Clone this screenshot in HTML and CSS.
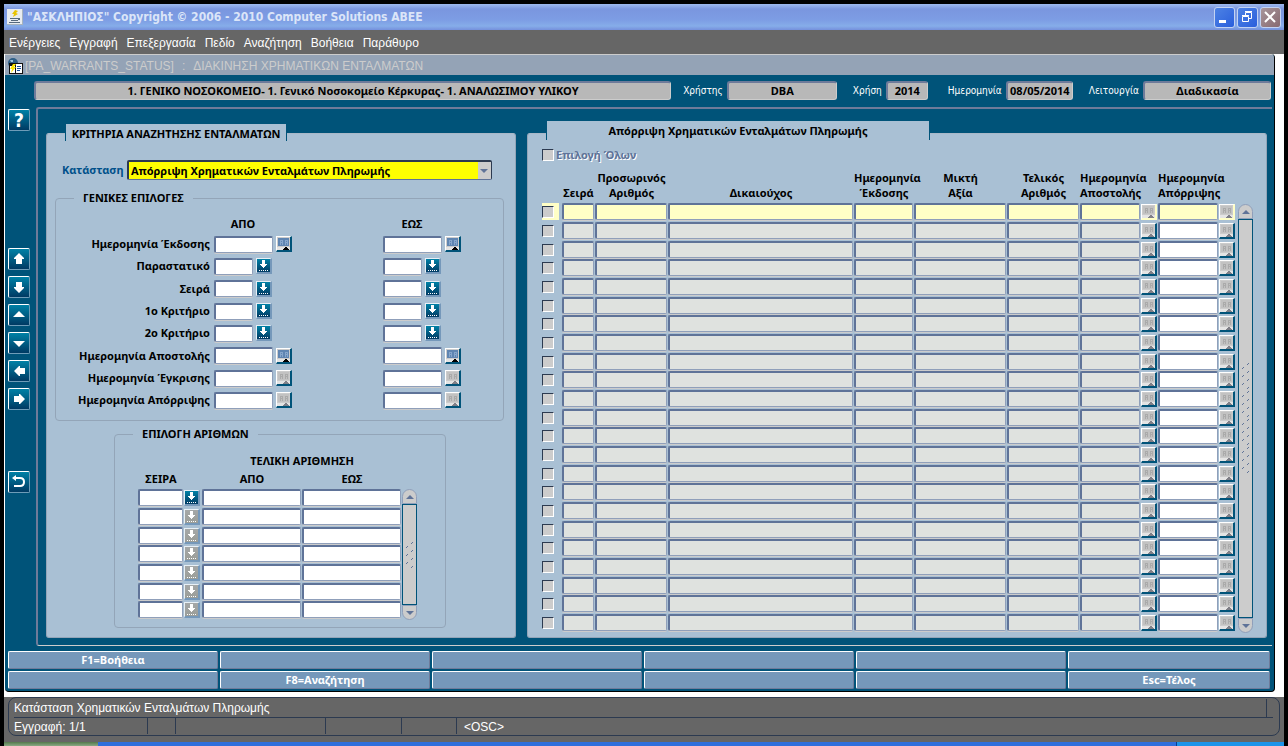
FILE: index.html
```html
<!DOCTYPE html>
<html lang="el">
<head>
    <meta charset="UTF-8">
    <title>ΑΣΚΛΗΠΙΟΣ</title>
    <link rel="stylesheet" href="styles.css">
</head>
<body>
<!--======= icons =======-->
<svg class="defs" width="0" height="0">
    <symbol id="i-lov" viewBox="0 0 13 13"><path fill="#fff" d="M5 1h3v4h2v1H9v1H8v1H7v1H6V8H5V7H4V6H3V5h2z"/><path stroke="#fff" stroke-dasharray="1 1" d="M2 11.500h9"/></symbol>
    <symbol id="i-cal" viewBox="0 0 13 13"><path fill="var(--sheet)" d="M1 1h11v8H1z"/><path fill="none" stroke="var(--grid)" d="M3 3.500h3M8 3.500h3M3 5.500h3M8 5.500h3M3.500 3v5M5.500 3v5M8.500 3v5M10.500 3v5"/><path fill="#e4e4e4" d="M0 10h13v3H0z"/><path fill="var(--peak)" d="M6 13v-1h1v-1h1v-1h2v1h1v1h1v1z"/></symbol>
    <symbol id="i-up" viewBox="0 0 18 18"><path fill="#fff" d="M9 3l5 5v1h-2v5H6V9H4V8z"/></symbol>
    <symbol id="i-down" viewBox="0 0 18 18"><path fill="#fff" d="M9 15l5-5V9h-2V4H6v5H4v1z"/></symbol>
    <symbol id="i-top" viewBox="0 0 18 18"><path fill="#fff" d="M9 5l6 6H3z"/></symbol>
    <symbol id="i-bottom" viewBox="0 0 18 18"><path fill="#fff" d="M9 13L3 7h12z"/></symbol>
    <symbol id="i-left" viewBox="0 0 18 18"><path fill="#fff" d="M4 9l5-5h1v2h5v6h-5v2H9z"/></symbol>
    <symbol id="i-right" viewBox="0 0 18 18"><path fill="#fff" d="M15 9l-5-5H9v2H4v6h5v2h1z"/></symbol>
    <symbol id="i-back" viewBox="0 0 18 18"><path fill="none" stroke="#fff" stroke-width="2" d="M4 5h6q4 0 4 4t-4 4H4"/><path fill="#fff" d="M2 5l4-3v6z"/></symbol>
    <symbol id="i-tri-up" viewBox="0 0 8 4"><path fill="#5f7398" d="M4 0l4 4H0z"/></symbol>
    <symbol id="i-tri-down" viewBox="0 0 8 4"><path fill="#5f7398" d="M4 4l4-4H0z"/></symbol>
    <symbol id="i-grip" viewBox="0 0 8 26"><path stroke="#5f7398" d="M0 6l2-2M5 2l2-2M0 14l2-2M5 10l2-2M0 22l2-2M5 18l2-2M5 26l2-2"/></symbol>
</svg>

<!--======= title bar =======-->
<header class="titlebar">
    <svg class="app-icon" width="16" height="16" viewBox="0 0 16 16"><path fill="#e8ecf0" d="M0 0h16v16H0z"/><path fill="#a7b3bd" d="M0 15h16v1H0zM15 0h1v16h-1z"/><path fill="#e9c400" d="M8 1l3 1-2 2 2 1-5 3 1-3H5z"/><path fill="#566a7d" d="M3 9h8v1H3zM4 11h7v1H4zM2 13h11v1H2zM11 9h2v2h-2z"/></svg>
    <h1>"ΑΣΚΛΗΠΙΟΣ" Copyright © 2006 - 2010 Computer Solutions ABEE</h1>
    <button class="win" type="button" aria-label="Ελαχιστοποίηση"><svg width="18" height="18" viewBox="0 0 18 18"><path fill="#fff" d="M4 12h7v3H4z"/></svg></button>
    <button class="win" type="button" aria-label="Επαναφορά"><svg width="18" height="18" viewBox="0 0 18 18"><path fill="none" stroke="#fff" d="M4.500 8.500h6v5h-6zM4 7.500h7M7.500 7V4.500h6v6H11M7 3.500h7"/></svg></button>
    <button class="win close" type="button" aria-label="Κλείσιμο"><svg width="18" height="18" viewBox="0 0 18 18"><path stroke="#fff" stroke-width="2" d="M4 4l10 10M14 4L4 14"/></svg></button>
</header>

<nav class="menubar">
    <a href="#">Ενέργειες</a>
    <a href="#">Εγγραφή</a>
    <a href="#">Επεξεργασία</a>
    <a href="#">Πεδίο</a>
    <a href="#">Αναζήτηση</a>
    <a href="#">Βοήθεια</a>
    <a href="#">Παράθυρο</a>
</nav>

<main class="mdi">
<div class="window">
    <div class="window-title">
        <svg width="16" height="16" viewBox="0 0 16 16"><circle cx="6" cy="5" r="5" fill="#2f5f86"/><path fill="#9fc4dd" d="M3 2h3v2H4zM7 5h3v2H7z"/><path fill="#111" d="M2 5h14v11H2z"/><path fill="#fff" d="M3 8h5v7H3zM9 6h6v9H9z"/><path fill="#ffe600" d="M6 6h3l-2 3h2l-5 6 1-4H3z"/><path fill="#1c4f9c" d="M10 8h4v1h-4zM10 10h4v1h-4zM10 12h3v1h-3z"/></svg>
        <span class="code">[PA_WARRANTS_STATUS]</span><span class="colon">:</span><span>ΔΙΑΚΙΝΗΣΗ ΧΡΗΜΑΤΙΚΩΝ ΕΝΤΑΛΜΑΤΩΝ</span>
    </div>

    <div class="info">
        <output class="grow">1. ΓΕΝΙΚΟ ΝΟΣΟΚΟΜΕΙΟ- 1. Γενικό Νοσοκομείο Κέρκυρας- 1. ΑΝΑΛΩΣΙΜΟΥ ΥΛΙΚΟΥ</output>
        <label for="usr">Χρήστης</label><output id="usr" class="w-user">DBA</output>
        <label for="yr">Χρήση</label><output id="yr" class="w-year">2014</output>
        <label for="dt">Ημερομηνία</label><output id="dt" class="w-date">08/05/2014</output>
        <label for="fn">Λειτουργία</label><output id="fn" class="w-func">Διαδικασία</output>
    </div>

    <div class="work">
        <div class="rail">
            <button type="button" class="help" aria-label="Βοήθεια">?</button>
            <div class="moves">
                <button type="button" aria-label="Πάνω"><svg><use href="#i-up"/></svg></button>
                <button type="button" aria-label="Κάτω"><svg><use href="#i-down"/></svg></button>
                <button type="button" aria-label="Προηγούμενη"><svg><use href="#i-top"/></svg></button>
                <button type="button" aria-label="Επόμενη"><svg><use href="#i-bottom"/></svg></button>
                <button type="button" aria-label="Αριστερά"><svg><use href="#i-left"/></svg></button>
                <button type="button" aria-label="Δεξιά"><svg><use href="#i-right"/></svg></button>
            </div>
            <button type="button" aria-label="Επιστροφή"><svg><use href="#i-back"/></svg></button>
        </div>

        <div class="canvas">
            <!--======= criteria =======-->
            <section class="panel criteria">
                <h2 class="tab">ΚΡΙΤΗΡΙΑ ΑΝΑΖΗΤΗΣΗΣ ΕΝΤΑΛΜΑΤΩΝ</h2>
                <div class="state">
                    <label for="state">Κατάσταση</label>
                    <div class="combo">
                        <select id="state"><option>Απόρριψη Χρηματικών Ενταλμάτων Πληρωμής</option></select>
                        <svg width="8" height="4"><use href="#i-tri-down"/></svg>
                    </div>
                </div>
                <fieldset class="general">
                    <legend>ΓΕΝΙΚΕΣ ΕΠΙΛΟΓΕΣ</legend>
                    <div class="range heads"><span></span><span>ΑΠΟ</span><span>ΕΩΣ</span></div>
                    <div id="ranges"></div>
                </fieldset>
                <fieldset class="numbers">
                    <legend>ΕΠΙΛΟΓΗ ΑΡΙΘΜΩΝ</legend>
                    <div class="scrolled">
                        <table>
                            <colgroup><col class="c-ser"><col class="c-lov"><col class="c-num"><col class="c-num"></colgroup>
                            <thead>
                                <tr><th></th><th></th><th colspan="2">ΤΕΛΙΚΗ ΑΡΙΘΜΗΣΗ</th></tr>
                                <tr><th>ΣΕΙΡΑ</th><th></th><th>ΑΠΟ</th><th>ΕΩΣ</th></tr>
                            </thead>
                            <tbody id="numbers"></tbody>
                        </table>
                        <div class="scroll"><button type="button" aria-label="Πάνω"><svg width="8" height="4"><use href="#i-tri-up"/></svg></button><div class="thumb"><svg width="8" height="26"><use href="#i-grip"/></svg></div><button type="button" aria-label="Κάτω"><svg width="8" height="4"><use href="#i-tri-down"/></svg></button></div>
                    </div>
                </fieldset>
            </section>

            <!--======= warrants =======-->
            <section class="panel warrants">
                <h2 class="tab">Απόρριψη Χρηματικών Ενταλμάτων Πληρωμής</h2>
                <label class="all"><input type="checkbox" disabled>Επιλογή Όλων</label>
                <div class="scrolled">
                    <table>
                        <colgroup>
                            <col class="c-chk"><col class="c-no"><col class="c-tmp"><col><col class="c-date"><col class="c-val"><col class="c-fin"><col class="c-day"><col class="c-btn"><col class="c-day"><col class="c-btn">
                        </colgroup>
                        <thead>
                            <tr>
                                <th></th><th>Σειρά</th><th>Προσωρινός<br>Αριθμός</th><th>Δικαιούχος</th><th>Ημερομηνία<br>Έκδοσης</th><th>Μικτή<br>Αξία</th><th>Τελικός<br>Αριθμός</th><th>Ημερομηνία<br>Αποστολής</th><th></th><th>Ημερομηνία<br>Απόρριψης</th><th></th>
                            </tr>
                        </thead>
                        <tbody id="warrants"></tbody>
                    </table>
                    <div class="scroll"><button type="button" aria-label="Πάνω"><svg width="8" height="4"><use href="#i-tri-up"/></svg></button><div class="thumb"><svg width="8" height="112"><use href="#i-grip" y="0" height="26"/><use href="#i-grip" y="28" height="26"/><use href="#i-grip" y="56" height="26"/><use href="#i-grip" y="84" height="26"/></svg></div><button type="button" aria-label="Κάτω"><svg width="8" height="4"><use href="#i-tri-down"/></svg></button></div>
                </div>
            </section>
        </div>
    </div>

    <div class="keys">
        <button type="button">F1=Βοήθεια</button><button type="button" aria-label="F2"></button><button type="button" aria-label="F3"></button><button type="button" aria-label="F4"></button><button type="button" aria-label="F5"></button><button type="button" aria-label="F6"></button>
        <button type="button" aria-label="F7"></button><button type="button">F8=Αναζήτηση</button><button type="button" aria-label="F9"></button><button type="button" aria-label="F10"></button><button type="button" aria-label="F11"></button><button type="button">Esc=Τέλος</button>
    </div>
</div>
</main>

<footer class="status">
    <div class="status-box">
        <p class="hint">Κατάσταση Χρηματικών Ενταλμάτων Πληρωμής</p>
        <div class="cells"><span class="rec">Εγγραφή: 1/1</span><span class="s1"></span><span class="s2"></span><span class="s3"></span><span class="s4"></span><span class="osc">&lt;OSC&gt;</span></div>
    </div>
</footer>
<div class="taskbar"><i class="start"></i><i class="tasks"></i><i class="tray"></i></div>
<script src="app.js"></script>
</body>
</html>
```
FILE: styles.css
```css
* {box-sizing: border-box;}
body {margin: 0;min-height: 100vh;display: flex;flex-direction: column;padding: 4px 4px 0;background: #000;color: #000;font: bold 11px/14px "Noto Sans", "DejaVu Sans Condensed", sans-serif;}
h1, h2, p {margin: 0;font-size: inherit;}
button, input, select {margin: 0;padding: 0;border: 0;border-radius: 0;font: inherit;color: inherit;}
svg {display: block;}
.defs {position: absolute;}

/*======= title bar, menu =======*/
.titlebar {display: flex;align-items: center;gap: 2px;height: 26px;padding: 0 3px;background: linear-gradient(#9db9ee 0, #7a96df 5px, #7d9de4 16px, #86ade9 22px, #7590dc 26px);}
.titlebar h1 {flex: 1;padding-left: 2px;color: #dbe5f8;font: bold 12px/16px "DejaVu Sans Condensed", sans-serif;}
.win {width: 21px;height: 21px;border: 1px solid #c3d3f3;border-radius: 3px;background: linear-gradient(135deg, #4d82e4, #2a5fdc);}
.win.close {background: linear-gradient(135deg, #a8969c, #87696f);}
.menubar {display: flex;gap: 9px;padding: 6px 5px 4px;background: #666;font: 12px/14px "Liberation Sans", sans-serif;}
.menubar a {color: #fff;text-decoration: none;}

/*======= window =======*/
.mdi {padding: 0 9px 5px 1px;background: #fff;}
.window {border-right: 1px solid #000;border-bottom: 1px solid #000;border-radius: 0 4px 4px 4px;background: #005379;overflow: hidden;}
.window-title {display: flex;align-items: center;height: 21px;padding: 1px 0 0 2px;border-top: 1px solid #ccc;background: #94a3b6;color: #ccc;font: 12px/14px "Liberation Sans", sans-serif;}
.colon {padding: 0 8px;}
.code {padding-left: 2px;}

.info {display: flex;align-items: center;height: 32px;padding: 0 3px 2px 29px;}
.info label {padding: 1px 4px 0 12px;color: #fff;font: 10px/14px "DejaVu Sans Condensed", sans-serif;white-space: nowrap;}
.info output {height: 19px;border: 2px solid #6e7b9a;border-right: 1px solid #ccc;border-bottom: 1px solid #ccc;border-radius: 3px;background: #b8b8b8;line-height: 16px;text-align: center;white-space: nowrap;overflow: hidden;}
.info .grow {flex: 1;}
.w-user {width: 110px;margin-right: 4px;}
.w-year {width: 42px;margin-right: 8px;}
.w-date {width: 67px;margin-right: 4px;}
.w-func {width: 128px;}

/*======= left rail =======*/
.work {display: flex;padding-right: 2px;}
.rail {width: 31px;padding: 2px 0 0 3px;}
.rail button {display: flex;width: 22px;height: 22px;padding: 1px;border: 1px solid #6e9cb8;border-top-color: #fff;border-left-color: #fff;border-radius: 2px;background: linear-gradient(#0081a6, #003a63);}
.rail svg {width: 18px;height: 18px;}
.rail .help {justify-content: center;color: #fff;font: bold 19px/18px "DejaVu Sans Condensed", sans-serif;}
.moves {display: grid;gap: 6px;margin: 117px 0 61px;}

/*======= panels =======*/
.canvas {flex: 1;display: flex;gap: 11px;padding: 24px 5px 7px 8px;border: 2px solid #6e7b9a;border-right: 0;border-bottom: 1px solid #ccc;border-radius: 3px 0 0 3px;}
.panel {padding-bottom: 4px;border: 1px solid #93a5b8;border-top-color: #a9b8c8;border-radius: 3px;background: #a9c0d4;}
.criteria {width: 470px;}
.warrants {flex: 1;padding-left: 14px;}
.tab {border: 1px solid #005379;border-width: 0 1px;background: #a9c0d4;text-align: center;}
.criteria .tab {width: 222px;height: 17px;margin: -10px 0 0 18px;line-height: 20px;}
.warrants .tab {width: 384px;height: 19px;margin: -13px 0 0 4px;line-height: 20px;}

.state {display: flex;align-items: center;margin: 19px 0 11px 15px;}
.state label {width: 65px;padding-right: 4px;text-align: right;color: #00508a;}
.combo {position: relative;width: 365px;}
.combo select {display: block;width: 100%;height: 20px;padding-left: 2px;border: 2px solid #2c3a50;border-right-width: 1px;border-bottom: 1px solid #5f7398;border-radius: 2px;background: linear-gradient(to left, #ccc 13px, #ff0 13px);appearance: none;outline: none;}
.combo svg {position: absolute;right: 4px;top: 9px;}

fieldset {min-width: 0;margin: 0;padding: 0;border: 1px solid #93a5b8;border-radius: 4px;}
legend {margin-left: 18px;padding: 0 9px;}
.general {margin: 0 11px 6px 8px;padding-bottom: 9px;}
.range {display: grid;grid-template-columns: 158px 169px 1fr;align-items: center;height: 22px;}
#ranges .range:nth-child(3n) {height: 23px;}
.range label {padding-right: 4px;text-align: right;}
.range.heads {height: 16px;margin: 11px 0 1px;}
.heads span {width: 58px;text-align: center;}
.pair {display: flex;align-items: center;gap: 3px;}
.pair input {width: 59px;height: 17px;}
.pair .short {width: 39px;}

/*======= fields =======*/
.field {display: block;width: 100%;height: 17px;border: 2px solid #5f7398;border-right: 1px solid #8f9fba;border-bottom: 1px solid #8f9fba;border-radius: 2px;background: #fff;box-shadow: 0 1px #ccc;outline: none;}
.field:read-only {background: #dfe2df;}
.lov, .cal {display: block;flex: none;width: 16px;height: 16px;border: 2px solid #fff;border-width: 1px 2px 2px 1px;}
.lov {border-color: #e8f0f6 #7598ba #7598ba #e8f0f6;background: linear-gradient(#0081a6, #003a63);}
.lov:disabled {background: linear-gradient(#a5a8a8, #9a9d98);}
.lov svg, .cal svg {width: 13px;height: 13px;}
.cal {--sheet: #5f85b2;--grid: #86a6cc;--peak: #000;border-color: #fff #005379 #005379 #fff;background: #ccc;}
.cal:disabled {--sheet: #c2c2c2;--grid: #aaa;--peak: #808088;}

/*======= tables =======*/
table {table-layout: fixed;width: 100%;border-collapse: collapse;}
th, td {padding: 0;}
td {height: 19px;padding: 0 1px 2px 0;}
tr:nth-child(3n) td {height: 18px;padding-bottom: 1px;}
.scrolled {display: flex;align-items: flex-end;}

.numbers {width: 332px;margin-left: 67px;padding: 12px 28px 7px 23px;}
.numbers legend {margin-left: -5px;}
.numbers th {height: 18px;line-height: 16px;vertical-align: top;}
.c-ser {width: 46px;}
.c-lov {width: 18px;}
.c-btn {width: 17px;}

.all {display: flex;align-items: center;gap: 2px;height: 20px;margin-top: 5px;color: #5f7398;text-shadow: 1px 1px #fff;}
input[type=checkbox] {flex: none;display: block;width: 12px;height: 12px;border: 1px solid #fff;border-top-color: #2c3a50;border-left-color: #2c3a50;background: #ccc;appearance: none;}
.warrants .scrolled {margin-top: 4px;}
.warrants th {height: 34px;padding-bottom: 3px;line-height: 15px;vertical-align: bottom;white-space: nowrap;}
.c-chk {width: 20px;}
.c-no {width: 33px;}
.c-tmp {width: 73px;}
.c-date {width: 60px;}
.c-val {width: 93px;}
.c-fin {width: 73px;}
.c-day {width: 61px;}
.pick {display: flex;align-items: center;width: 17px;height: 17px;}
.current .pick {background: #ffffc6;}
.current .field {background: #ffffc6;}
.current .cal {border-color: #fff #ffffc6 #ffffc6 #fff;}

.scroll {display: flex;flex-direction: column;flex: none;width: 15px;}
.numbers .scroll {height: 131px;}
.warrants .scroll {height: 429px;margin: 0 13px 0 2px;}
.scroll button {display: flex;align-items: center;justify-content: center;width: 15px;height: 15px;border: 1px solid #8f9fba;border-radius: 8px 8px 0 0;background: #ccc;}
.scroll button:last-child {border-radius: 0 0 8px 8px;}
.thumb {flex: 1;display: flex;align-items: center;justify-content: center;border: 1px solid #005379;background: #ccc;}

/*======= function keys =======*/
.keys {display: grid;grid-template-columns: repeat(5, 210fr) 202fr;gap: 2px;padding: 5px 4px 2px 3px;}
.keys button {height: 18px;border: 1px solid #6e7b9a;border-top-color: #fff;border-left-color: #fff;border-radius: 2px;background: #7598ba;color: #fff;}

/*======= status, taskbar =======*/
.status {flex: 1;padding: 0 4px 6px;background: #666;color: #fff;font: 12px/18px "Liberation Sans", sans-serif;}
.status-box {padding: 1px 6px 0 5px;border: 1px solid #2c3a50;border-radius: 8px;}
.hint {height: 18px;margin-right: 6px;border-right: 1px solid #2c3a50;}
.cells {display: flex;height: 18px;border-top: 1px solid #2c3a50;}
.cells span {height: 16px;border-right: 1px solid #2c3a50;}
.rec {width: 134px;}
.s1 {width: 28px;}
.s2 {width: 150px;}
.s3 {width: 76px;}
.s4 {width: 55px;}
.cells .osc {padding-left: 7px;border: 0;}
.taskbar {display: flex;height: 4px;}
.start {width: 94px;background: linear-gradient(#54794c, #8aa884);}
.tasks {flex: 1;background: #2f6fdc;}
.tray {width: 108px;border-left: 1px solid #0b3d8f;background: #1c94ea;}
```
FILE: app.js
```js
const field = (label, cls = '', attr = '') => `<input class="field ${cls}" type="text" aria-label="${label}" ${attr}>`;
const button = (type, label, off) => `<button type="button" class="${type}" aria-label="${label}" ${off ? 'disabled' : ''}><svg><use href="#i-${type}"/></svg></button>`;

// label, button type, disabled
const ranges = [
    ['Ημερομηνία Έκδοσης', 'cal', false],
    ['Παραστατικό', 'lov', false],
    ['Σειρά', 'lov', false],
    ['1ο Κριτήριο', 'lov', false],
    ['2ο Κριτήριο', 'lov', false],
    ['Ημερομηνία Αποστολής', 'cal', false],
    ['Ημερομηνία Έγκρισης', 'cal', true],
    ['Ημερομηνία Απόρριψης', 'cal', true]
];
document.getElementById('ranges').innerHTML = ranges.map(([label, type, off], i) => {
    const size = type === 'lov' ? 'short' : '';
    return `<div class="range"><label for="from${i}">${label}</label>
        <div class="pair">${field(label + ' από', size, `id="from${i}"`)}${button(type, label, off)}</div>
        <div class="pair">${field(label + ' έως', size)}${button(type, label, off)}</div></div>`;
}).join('');

let rows = '';
for (let i = 0; i < 7; i++) {
    rows += `<tr><td>${field('Σειρά')}</td><td>${button('lov', 'Σειρά', i > 0)}</td><td>${field('Από')}</td><td>${field('Έως')}</td></tr>`;
}
document.getElementById('numbers').innerHTML = rows;

const locked = ['Σειρά', 'Προσωρινός Αριθμός', 'Δικαιούχος', 'Ημερομηνία Έκδοσης', 'Μικτή Αξία', 'Τελικός Αριθμός', 'Ημερομηνία Αποστολής'];
rows = '';
for (let i = 0; i < 23; i++) {
    rows += `<tr class="${i === 0 ? 'current' : ''}"><td><div class="pick"><input type="checkbox" aria-label="Επιλογή" disabled></div></td>
        ${locked.map(l => `<td>${field(l, '', 'readonly')}</td>`).join('')}
        <td>${button('cal', 'Αποστολή', true)}</td><td>${field('Ημερομηνία Απόρριψης')}</td><td>${button('cal', 'Απόρριψη', true)}</td></tr>`;
}
document.getElementById('warrants').innerHTML = rows;
```
